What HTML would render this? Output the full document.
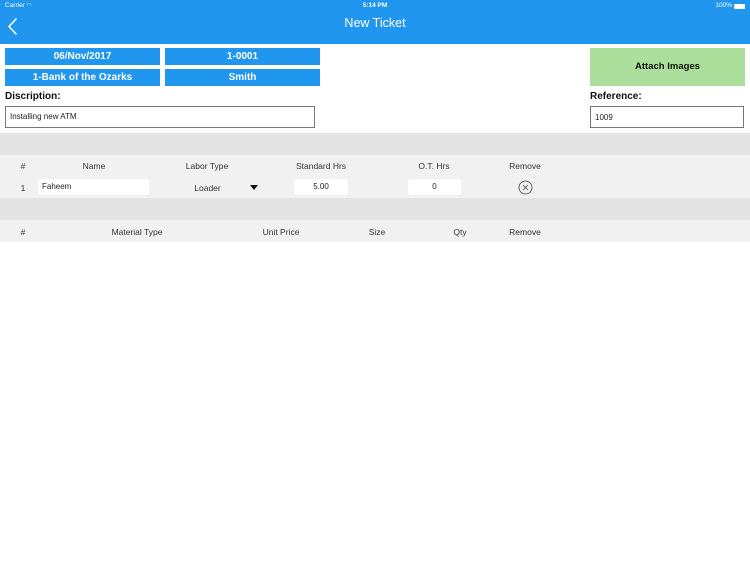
<!DOCTYPE html>
<html><head><meta charset="utf-8"><style>
*{margin:0;padding:0;box-sizing:border-box}
body{width:750px;height:562px;background:#fff;font-family:"Liberation Sans",sans-serif;position:relative;overflow:hidden;color:#222}
.a{position:absolute}
.nav{left:0;top:0;width:750px;height:44px;background:#2196ee;color:#fff}
.btn{background:#2196ee;color:#fff;font-size:10px;font-weight:bold;text-align:center;line-height:18px;height:17px}
.lbl{font-size:10px;font-weight:bold;color:#111}
.box{border:1px solid #777;background:#fff;font-size:8px;padding:0 4px;display:flex;align-items:center}
.h{font-size:8.5px;color:#333;text-align:center}
.inp{background:#fff;border-radius:3px;font-size:8px;height:16px;line-height:16px}
</style></head><body>
<div class="a nav">
 <div class="a" style="left:5px;top:2px;font-size:6.5px">Carrier <span style="font-size:6px">◠</span></div>
 <div class="a" style="left:0;width:750px;top:2px;font-size:6.5px;text-align:center;font-weight:bold">5:14 PM</div>
 <div class="a" style="right:18px;top:2px;font-size:6.5px">100%</div>
 <div class="a" style="right:5px;top:4px;width:11px;height:5px;background:#fff;border-radius:1px"></div>
 <svg class="a" style="left:7px;top:17px" width="12" height="19" viewBox="0 0 12 19"><path d="M9.5 1.5 L2 9.5 L9.5 17.5" stroke="#fff" stroke-width="1.5" fill="none"/></svg>
 <div class="a" style="left:0;width:750px;top:16px;font-size:12.5px;text-align:center">New Ticket</div>
</div>
<div class="a btn" style="left:5px;top:48px;width:155px">06/Nov/2017</div>
<div class="a btn" style="left:165px;top:48px;width:155px">1-0001</div>
<div class="a btn" style="left:5px;top:69px;width:155px">1-Bank of the Ozarks</div>
<div class="a btn" style="left:165px;top:69px;width:155px">Smith</div>
<div class="a" style="left:590px;top:48px;width:155px;height:38px;background:#abdf9b;font-size:9.5px;font-weight:bold;text-align:center;line-height:38px;color:#111">Attach Images</div>
<div class="a lbl" style="left:5px;top:91px">Discription:</div>
<div class="a lbl" style="left:590px;top:91px">Reference:</div>
<div class="a box" style="left:5px;top:106px;width:310px;height:22px;align-items:flex-start;padding-top:5px">Installing new ATM</div>
<div class="a box" style="left:590px;top:106px;width:154px;height:22px">1009</div>
<div class="a" style="left:0;top:133px;width:750px;height:22px;background:#e3e3e3"></div>
<div class="a" style="left:0;top:155px;width:750px;height:43px;background:#f1f1f1"></div>
<div class="a" style="left:0;top:198px;width:750px;height:22px;background:#e3e3e3"></div>
<div class="a" style="left:0;top:220px;width:750px;height:22px;background:#f1f1f1"></div>
<div class="a h" style="left:13px;width:20px;top:161px">#</div>
<div class="a h" style="left:54px;width:80px;top:161px">Name</div>
<div class="a h" style="left:167px;width:80px;top:161px">Labor Type</div>
<div class="a h" style="left:276px;width:90px;top:161px">Standard Hrs</div>
<div class="a h" style="left:394px;width:80px;top:161px">O.T. Hrs</div>
<div class="a h" style="left:495px;width:60px;top:161px">Remove</div>
<div class="a h" style="left:13px;width:20px;top:183px">1</div>
<div class="a inp" style="left:38px;top:179px;width:111px;padding-left:4px">Faheem</div>
<div class="a h" style="left:180px;width:55px;top:183px">Loader</div>
<div class="a" style="left:250px;top:185px;width:0;height:0;border-left:4px solid transparent;border-right:4px solid transparent;border-top:5px solid #111"></div>
<div class="a inp" style="left:294px;top:179px;width:54px;text-align:center">5.00</div>
<div class="a inp" style="left:408px;top:179px;width:53px;text-align:center">0</div>
<svg class="a" style="left:518px;top:180px" width="15" height="15" viewBox="0 0 15 15"><circle cx="7.5" cy="7.5" r="6.5" stroke="#444" stroke-width="0.8" fill="none"/><path d="M5 5 L10 10 M10 5 L5 10" stroke="#444" stroke-width="0.8"/></svg>
<div class="a h" style="left:13px;width:20px;top:227px">#</div>
<div class="a h" style="left:97px;width:80px;top:227px">Material Type</div>
<div class="a h" style="left:251px;width:60px;top:227px">Unit Price</div>
<div class="a h" style="left:357px;width:40px;top:227px">Size</div>
<div class="a h" style="left:440px;width:40px;top:227px">Qty</div>
<div class="a h" style="left:495px;width:60px;top:227px">Remove</div>
</body></html>
